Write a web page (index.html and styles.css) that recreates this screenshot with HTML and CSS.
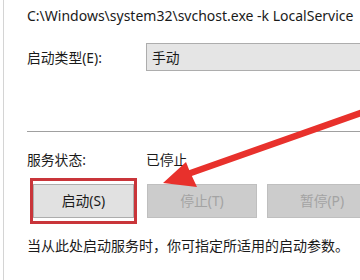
FILE: index.html
```
<!DOCTYPE html>
<html>
<head>
<meta charset="utf-8">
<link rel="stylesheet" href="styles.css">
</head>
<body>
<div class="frame">
  <div class="panel">
    <div class="path">C:\Windows\system32\svchost.exe -k LocalService</div>
    <div class="row type-row">
      <span class="label">启动类型(E):</span>
      <div class="combo">手动</div>
    </div>
    <div class="sep"></div>
    <div class="row status-row">
      <span class="label">服务状态:</span>
      <span class="value">已停止</span>
    </div>
    <div class="buttons">
      <div class="highlight"><div class="btn active">启动(S)</div></div>
      <div class="btn disabled">停止(T)</div>
      <div class="btn disabled">暂停(P)</div>
    </div>
    <div class="desc">当从此处启动服务时，你可指定所适用的启动参数。</div>
  </div>
  <svg class="arrow" width="360" height="280" viewBox="0 0 360 280">
    <line x1="372" y1="109" x2="185" y2="175" stroke="#e8312c" stroke-width="6.5" stroke-linecap="round"/>
    <polygon points="163,183 186,162 190,172 197,187" fill="#e8312c"/>
  </svg>
</div>
</body>
</html>
```
FILE: styles.css
```
html, body {
  margin: 0;
  padding: 0;
  background: #ffffff;
}
.frame {
  position: relative;
  width: 360px;
  height: 280px;
  overflow: hidden;
  font-family: "Noto Sans", "Noto Sans CJK SC", sans-serif;
  font-size: 13.8px;
  color: #1a1a1a;
}
.panel {
  margin-left: 3px;
  border-left: 1px solid #d4d4d4;
  height: 280px;
  padding-left: 23px;
  display: flex;
  flex-direction: column;
}
.path {
  margin-top: 6px;
  height: 20px;
  line-height: 20px;
  white-space: nowrap;
  font-size: 14px;
}
.row {
  display: flex;
  align-items: center;
}
.type-row {
  margin-top: 16px;
  height: 30px;
}
.label {
  width: 119px;
  flex: none;
}
.combo {
  flex: 1;
  height: 28px;
  line-height: 28px;
  background: #e5e5e5;
  border: 1px solid #adadad;
  border-right: none;
  padding-left: 5px;
  box-sizing: border-box;
}
.sep {
  margin-top: 59px;
  height: 1px;
  background: #a0a0a0;
}
.status-row {
  margin-top: 17px;
  height: 20px;
}
.buttons {
  margin-top: 15px;
  display: flex;
  gap: 10px;
  margin-left: 6px;
  white-space: nowrap;
}
.highlight {
  margin: -6px 0 -6px -3px;
  padding: 3px 0;
  border: 3px solid #c9353a;
  box-sizing: border-box;
  flex: none;
}
.btn {
  height: 34px;
  line-height: 32px;
  box-sizing: border-box;
  text-align: center;
}
.active {
  width: 101px;
  background: #e1e1e1;
  border: 1px solid #adadad;
}
.disabled {
  width: 110px;
  background: #cccccc;
  border: 1px solid #bfbfbf;
  color: #a3a3a3;
  flex: none;
}
.desc {
  margin-top: 18px;
  height: 20px;
  line-height: 20px;
  white-space: nowrap;
  font-size: 14px;
}
.arrow {
  position: absolute;
  left: 0;
  top: 0;
}
```
